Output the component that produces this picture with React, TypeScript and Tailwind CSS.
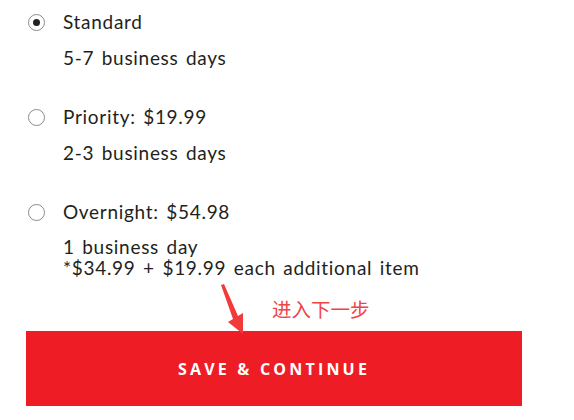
import React from "react";

const font = { fontFamily: '"Lato", "Noto Sans", sans-serif', wordSpacing: "2px" };

function Radio({ checked }: { checked?: boolean }) {
  return (
    <span className="flex h-[17px] w-[17px] shrink-0 items-center justify-center rounded-full border border-[#8a8a8a] bg-white">
      {checked && <span className="h-[7px] w-[7px] rounded-full bg-[#222]" />}
    </span>
  );
}

export default function App() {
  return (
    <div className="relative h-[420px] w-[574px] overflow-hidden bg-white text-[#231f20]" style={font}>
      <div className="pl-[28px] pt-[10px] tracking-[0.7px]">
        <div className="flex h-6 items-center gap-[18px]">
          <Radio checked />
          <span className="text-[19px] leading-6">Standard</span>
        </div>
        <div className="mt-3 pl-[35px] text-[19px] leading-6">5-7 business days</div>

        <div className="mt-[35px] flex h-6 items-center gap-[18px]">
          <Radio />
          <span className="text-[19px] leading-6">Priority: $19.99</span>
        </div>
        <div className="mt-3 pl-[35px] text-[19px] leading-6">2-3 business days</div>

        <div className="mt-[35px] flex h-6 items-center gap-[18px]">
          <Radio />
          <span className="text-[19px] leading-6">Overnight: $54.98</span>
        </div>
        <div className="mt-[12px] pl-[35px] text-[19px] leading-[21px]">
          <div>1 business day</div>
          <div>*$34.99 + $19.99 each additional item</div>
        </div>
      </div>

      <div className="absolute left-0 top-0">
        <span
          className="absolute left-[272px] top-[297px] whitespace-nowrap text-[19.5px] leading-[24px] text-[#f04444]"
          style={{ fontFamily: '"Noto Sans CJK SC", sans-serif' }}
        >
          进入下一步
        </span>
      </div>

      <div className="ml-[26px] mt-[53px] flex h-[75px] w-[496px] items-center justify-center bg-[#ee1d25]">
        <span
          className="text-[16px] font-bold tracking-[0.2em] text-white"
          style={{ fontFamily: '"Open Sans", sans-serif', wordSpacing: "0px" }}
        >
          SAVE &amp; CONTINUE
        </span>
      </div>

      <svg className="absolute left-0 top-0" width="574" height="420" viewBox="0 0 574 420">
        <polygon points="221,285 224,284 238,316 243,313 243,334 228,322 233,319" fill="#f23a3a" />
      </svg>
    </div>
  );
}
